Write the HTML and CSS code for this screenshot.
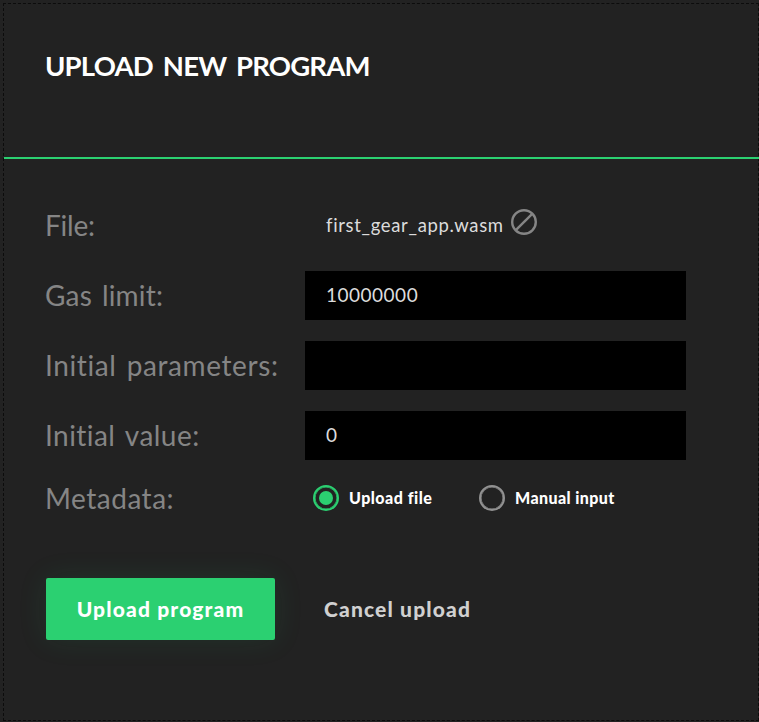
FILE: index.html
```html
<!DOCTYPE html>
<html lang="en">
<head>
<meta charset="utf-8">
<title>Upload new program</title>
<link rel="stylesheet" href="styles.css">
</head>
<body>
<main class="panel">
  <header class="panel-header"><h1 class="title"><span>UPLOAD NEW PROGRAM</span></h1></header>
  <form class="form">
    <div class="row">
      <span class="label l-file">File:</span>
      <div class="file"><span class="file-name">first_gear_app.wasm</span>
        <svg class="remove" viewBox="0 0 26 26" fill="none" stroke="#858585" stroke-width="2.4"><circle cx="13" cy="13" r="11.8"/><path d="M21.2 4.8 4.8 21.2"/></svg>
      </div>
    </div>
    <div class="row"><label class="label l-gas" for="gas">Gas limit:</label><input class="input" id="gas" value="10000000"></div>
    <div class="row"><label class="label l-params" for="params">Initial parameters:</label><input class="input" id="params"></div>
    <div class="row"><label class="label l-value" for="value">Initial value:</label><input class="input" id="value" value="0"></div>
    <div class="row row-meta">
      <span class="label l-meta">Metadata:</span>
      <div class="radios">
        <label class="radio"><input type="radio" name="meta" checked><span class="r-upload">Upload file</span></label>
        <label class="radio"><input type="radio" name="meta"><span class="r-manual">Manual input</span></label>
      </div>
    </div>
    <div class="actions">
      <button class="submit" type="button"><span>Upload program</span></button>
      <button class="cancel" type="button"><span>Cancel upload</span></button>
    </div>
  </form>
</main>
</body>
</html>
```
FILE: styles.css
```css
* { box-sizing: border-box; }
body { margin: 0; background: #222; font-family: Lato, "Open Sans", sans-serif; overflow: hidden; }
.panel { margin: 3px 0 0 3px; width: 756px; height: 718px; border: 1px dashed #0c0c0c; background: #222; }
.panel-header { height: 155px; border-bottom: 2px solid #2bd071; padding: 41px 0 0 41px; margin-right: -1px; }
.title { margin: 0; font-size: 27.5px; line-height: 42px; font-weight: 700; color: #fff; white-space: nowrap; letter-spacing: -.8px; word-spacing: 4px; }
.form { padding: 42px 0 0 42px; }
.row { display: flex; align-items: center; height: 49px; margin-bottom: 21px; }
.label { width: 260px; margin-left: -1px; padding-bottom: 2px; font-size: 28px; line-height: 40px; color: #858585; white-space: nowrap; font-variant-ligatures: none; }
.l-file { letter-spacing: -.2px; }
.l-gas { letter-spacing: .2px; word-spacing: 2.5px; }
.l-params { letter-spacing: .6px; word-spacing: 2.5px; }
.l-value { letter-spacing: .45px; word-spacing: 2.5px; }
.l-meta { letter-spacing: .5px; padding-bottom: 0; }
.file { display: flex; align-items: center; padding-left: 21px; font-size: 18.5px; color: #dcdcdc; }
.file-name { width: 177px; letter-spacing: .66px; white-space: nowrap; padding-bottom: 2px; }
.remove { width: 26px; height: 26px; margin: -7px 0 0 8px; }
.input { width: 381px; height: 49px; border: 0; border-radius: 0; background: #000; color: #dcdcdc; padding: 0 21px 3px; font: 19px Lato, sans-serif; letter-spacing: .5px; outline: 0; }
.row-meta { height: 26px; margin-top: 25px; margin-bottom: 67px; }
.radios { display: flex; padding-left: 8px; }
.radio { display: flex; align-items: center; width: 166px; font-size: 16px; font-weight: 900; color: #fff; white-space: nowrap; letter-spacing: .5px; }
.radio span { padding-bottom: 2px; }
.r-manual { letter-spacing: .4px; }
.radio input { appearance: none; width: 26px; height: 26px; margin: 0 10px 0 0; border: 2px solid #929292; border-radius: 50%; box-shadow: inset 0 0 0 .5px #929292; display: grid; place-items: center; }
.radio input:checked { border-color: #2bd071; box-shadow: inset 0 0 0 .5px #2bd071; }
.radio input:checked::before { content: ""; width: 14px; height: 14px; border-radius: 50%; background: #2bd071; }
.actions { display: flex; align-items: center; }
.submit, .cancel { border: 0; height: 62px; font: 900 21px Lato, sans-serif; letter-spacing: 1.15px; white-space: nowrap; padding: 0 0 2px; }
.submit { width: 229px; border-radius: 2px; color: #fff; background: #2bd071; box-shadow: 0 0 30px rgba(43, 208, 113, .1); }
.cancel { margin-left: 49px; background: none; color: #d0d0d0; }
```
